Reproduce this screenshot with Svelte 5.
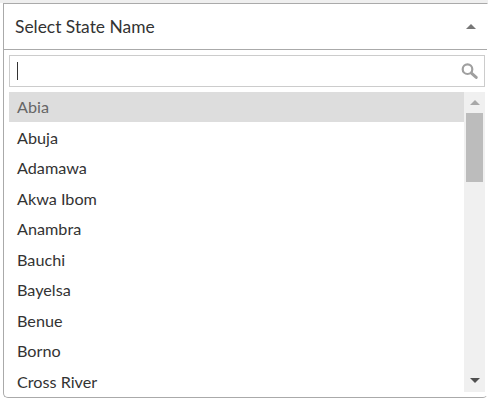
<script>
  const states = ['Abia','Abuja','Adamawa','Akwa Ibom','Anambra','Bauchi','Bayelsa','Benue','Borno','Cross River'];
</script>

<div class="page">
  <div class="panel">
    <div class="head">
      <span>Select State Name</span>
      <span class="caret"></span>
    </div>
    <div class="body">
      <div class="search">
        <span class="cursor"></span>
        <svg width="17" height="16" viewBox="0 0 17 16" aria-hidden="true">
          <circle cx="6.5" cy="6.2" r="4.8" fill="none" stroke="#a0a0a0" stroke-width="2.2"/>
          <path d="M10.4 10.2l4.8 4.2" stroke="#a0a0a0" stroke-width="3" stroke-linecap="round"/>
        </svg>
      </div>
      <div class="listbox">
        <ul>
          {#each states as s, i}
            <li class:active={i === 0}>{s}</li>
          {/each}
        </ul>
        <div class="bar">
          <span class="arrow up"></span>
          <span class="thumb"></span>
          <span class="track"></span>
          <span class="arrow down"></span>
        </div>
      </div>
    </div>
  </div>
</div>

<style>
  :global(body) { margin: 0; background: #fff; }
  .page { width: 488px; height: 402px; padding-top: 3px; box-sizing: border-box; background: linear-gradient(#efefef 3px, #fff 3px); overflow: hidden; }
  .panel {
    height: 395px; width: 485px; margin-left: 3px; box-sizing: border-box;
    border: 1px solid #aaa; border-right-color: #fff; border-radius: 0 0 5px 5px; overflow: hidden;
    font-family: Lato, sans-serif; color: #333; background: #fff;
  }
  .head {
    height: 46px; box-sizing: border-box; border-bottom: 1px solid #aaa;
    display: flex; align-items: center; justify-content: space-between;
    padding: 0 11px 0 11px; font-size: 17.4px; line-height: 20px;
  }
  .caret { width: 0; height: 0; border: 5px solid transparent; border-top: 0; border-bottom-color: #777; }
  .body { padding: 5px 0 0 5px; }
  .search {
    width: 476px; height: 32px; box-sizing: border-box; border: 1px solid #ccc;
    display: flex; align-items: center; justify-content: space-between; padding: 0 6px 0 7px;
  }
  .cursor { width: 1px; height: 18px; background: #333; }
  .listbox { display: flex; margin-top: 5px; height: 300px; width: 475px; }
  ul { list-style: none; margin: 0; padding: 0; width: 455px; flex: none; }
  li { height: 30.5px; box-sizing: border-box; padding: 0.5px 0 0 8px; line-height: 30px; font-size: 16.2px; }
  li.active { height: 30px; padding-top: 0; background: #ddd; color: #666; }
  .bar { width: 21px; flex: none; background: #f0f0f0; display: flex; flex-direction: column; align-items: center; }
  .arrow { width: 0; height: 0; border: 5px solid transparent; }
  .up { border-top: 0; border-bottom: 5px solid #a8a8a8; margin: 8px 0 8px; }
  .down { border-bottom: 0; border-top: 5px solid #505050; margin: 0 0 9px; }
  .thumb { width: 17px; height: 69px; background: #bcbcbc; }
  .track { flex: 1; }
</style>
